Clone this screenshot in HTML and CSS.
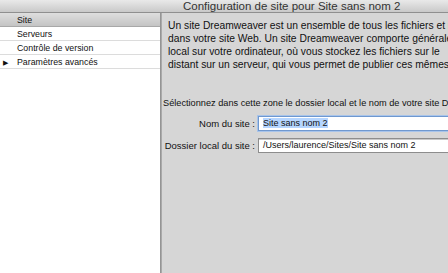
FILE: index.html
```html
<!DOCTYPE html>
<html lang="fr">
<head>
<meta charset="utf-8">
<link rel="stylesheet" href="styles.css">
</head>
<body>
<div class="window">
  <div class="titlebar">Configuration de site pour Site sans nom 2</div>
  <div class="main">
    <ul class="sidebar">
      <li class="item selected">Site</li>
      <li class="item">Serveurs</li>
      <li class="item">Contrôle de version</li>
      <li class="item"><span class="arrow">&#9654;</span>Paramètres avancés</li>
    </ul>
    <div class="divider"></div>
    <div class="content">
      <div class="intro">
        <div class="line">Un site Dreamweaver est un ensemble de tous les fichiers et ressources</div>
        <div class="line">dans votre site Web. Un site Dreamweaver comporte généralement deux parties :</div>
        <div class="line">local sur votre ordinateur, où vous stockez les fichiers sur le</div>
        <div class="line">distant sur un serveur, qui vous permet de publier ces mêmes fichiers sur le Web.</div>
      </div>
      <p class="hint">Sélectionnez dans cette zone le dossier local et le nom de votre site Dreamweaver.</p>
      <div class="form">
        <label class="label">Nom du site :</label>
        <div class="field focus"><span class="sel">Site sans nom 2</span></div>
        <label class="label">Dossier local du site :</label>
        <div class="field">/Users/laurence/Sites/Site sans nom 2</div>
      </div>
    </div>
  </div>
</div>
</body>
</html>
```
FILE: styles.css
```css
html, body {
  margin: 0;
  padding: 0;
}
body {
  width: 448px;
  height: 273px;
  overflow: hidden;
  font-family: "Liberation Sans", Arial, sans-serif;
  color: #111;
}
.window {
  display: flex;
  flex-direction: column;
  height: 273px;
}
.titlebar {
  height: 13px;
  box-sizing: border-box;
  background: linear-gradient(#e9e9e9, #c9c9c9);
  border-bottom: 1px solid #8f8f8f;
  font-size: 11.5px;
  line-height: 12px;
  color: #333;
  padding-left: 183px;
  white-space: nowrap;
}
.main {
  flex: 1;
  display: flex;
  min-height: 0;
}
.sidebar {
  width: 160px;
  margin: 0;
  padding: 0;
  list-style: none;
  background: #fff;
  font-size: 8.8px;
}
.item {
  height: 14px;
  box-sizing: border-box;
  line-height: 13px;
  padding: 1px 0 0 17px;
  border-bottom: 1px solid #dcdcdc;
  position: relative;
  white-space: nowrap;
}
.item.selected {
  background: linear-gradient(#dedede, #c4c4c4);
  border-bottom: 1px solid #a8a8a8;
}
.arrow {
  position: absolute;
  left: 3px;
  top: 1px;
  font-size: 7px;
}
.divider {
  width: 2px;
  background: linear-gradient(90deg, #8a8a8a, #b4b4b4);
}
.content {
  flex: 1;
  background: #d6d6d6;
  padding: 6px 0 0 0;
  white-space: nowrap;
  overflow: hidden;
}
.intro {
  margin: 0 0 0 6px;
  font-size: 10.3px;
  line-height: 13px;
}
.hint {
  margin: 26px 0 0 1px;
  font-size: 9.2px;
  line-height: 12px;
}
.form {
  display: grid;
  grid-template-columns: 93px 200px;
  column-gap: 3px;
  row-gap: 7px;
  align-items: center;
  margin-top: 7px;
  font-size: 9.5px;
}
.label {
  text-align: right;
}
.field {
  height: 15px;
  box-sizing: border-box;
  background: #fff;
  border: 1px solid #8d8d8d;
  box-shadow: inset 0 1px 0 #c8c8c8;
  line-height: 13px;
  padding-left: 4px;
  font-size: 9px;
}
.field.focus {
  border-color: #6f98cf;
  box-shadow: 0 0 0 1px #a8c4ea;
}
.sel {
  background: #b5d5ff;
}
```
